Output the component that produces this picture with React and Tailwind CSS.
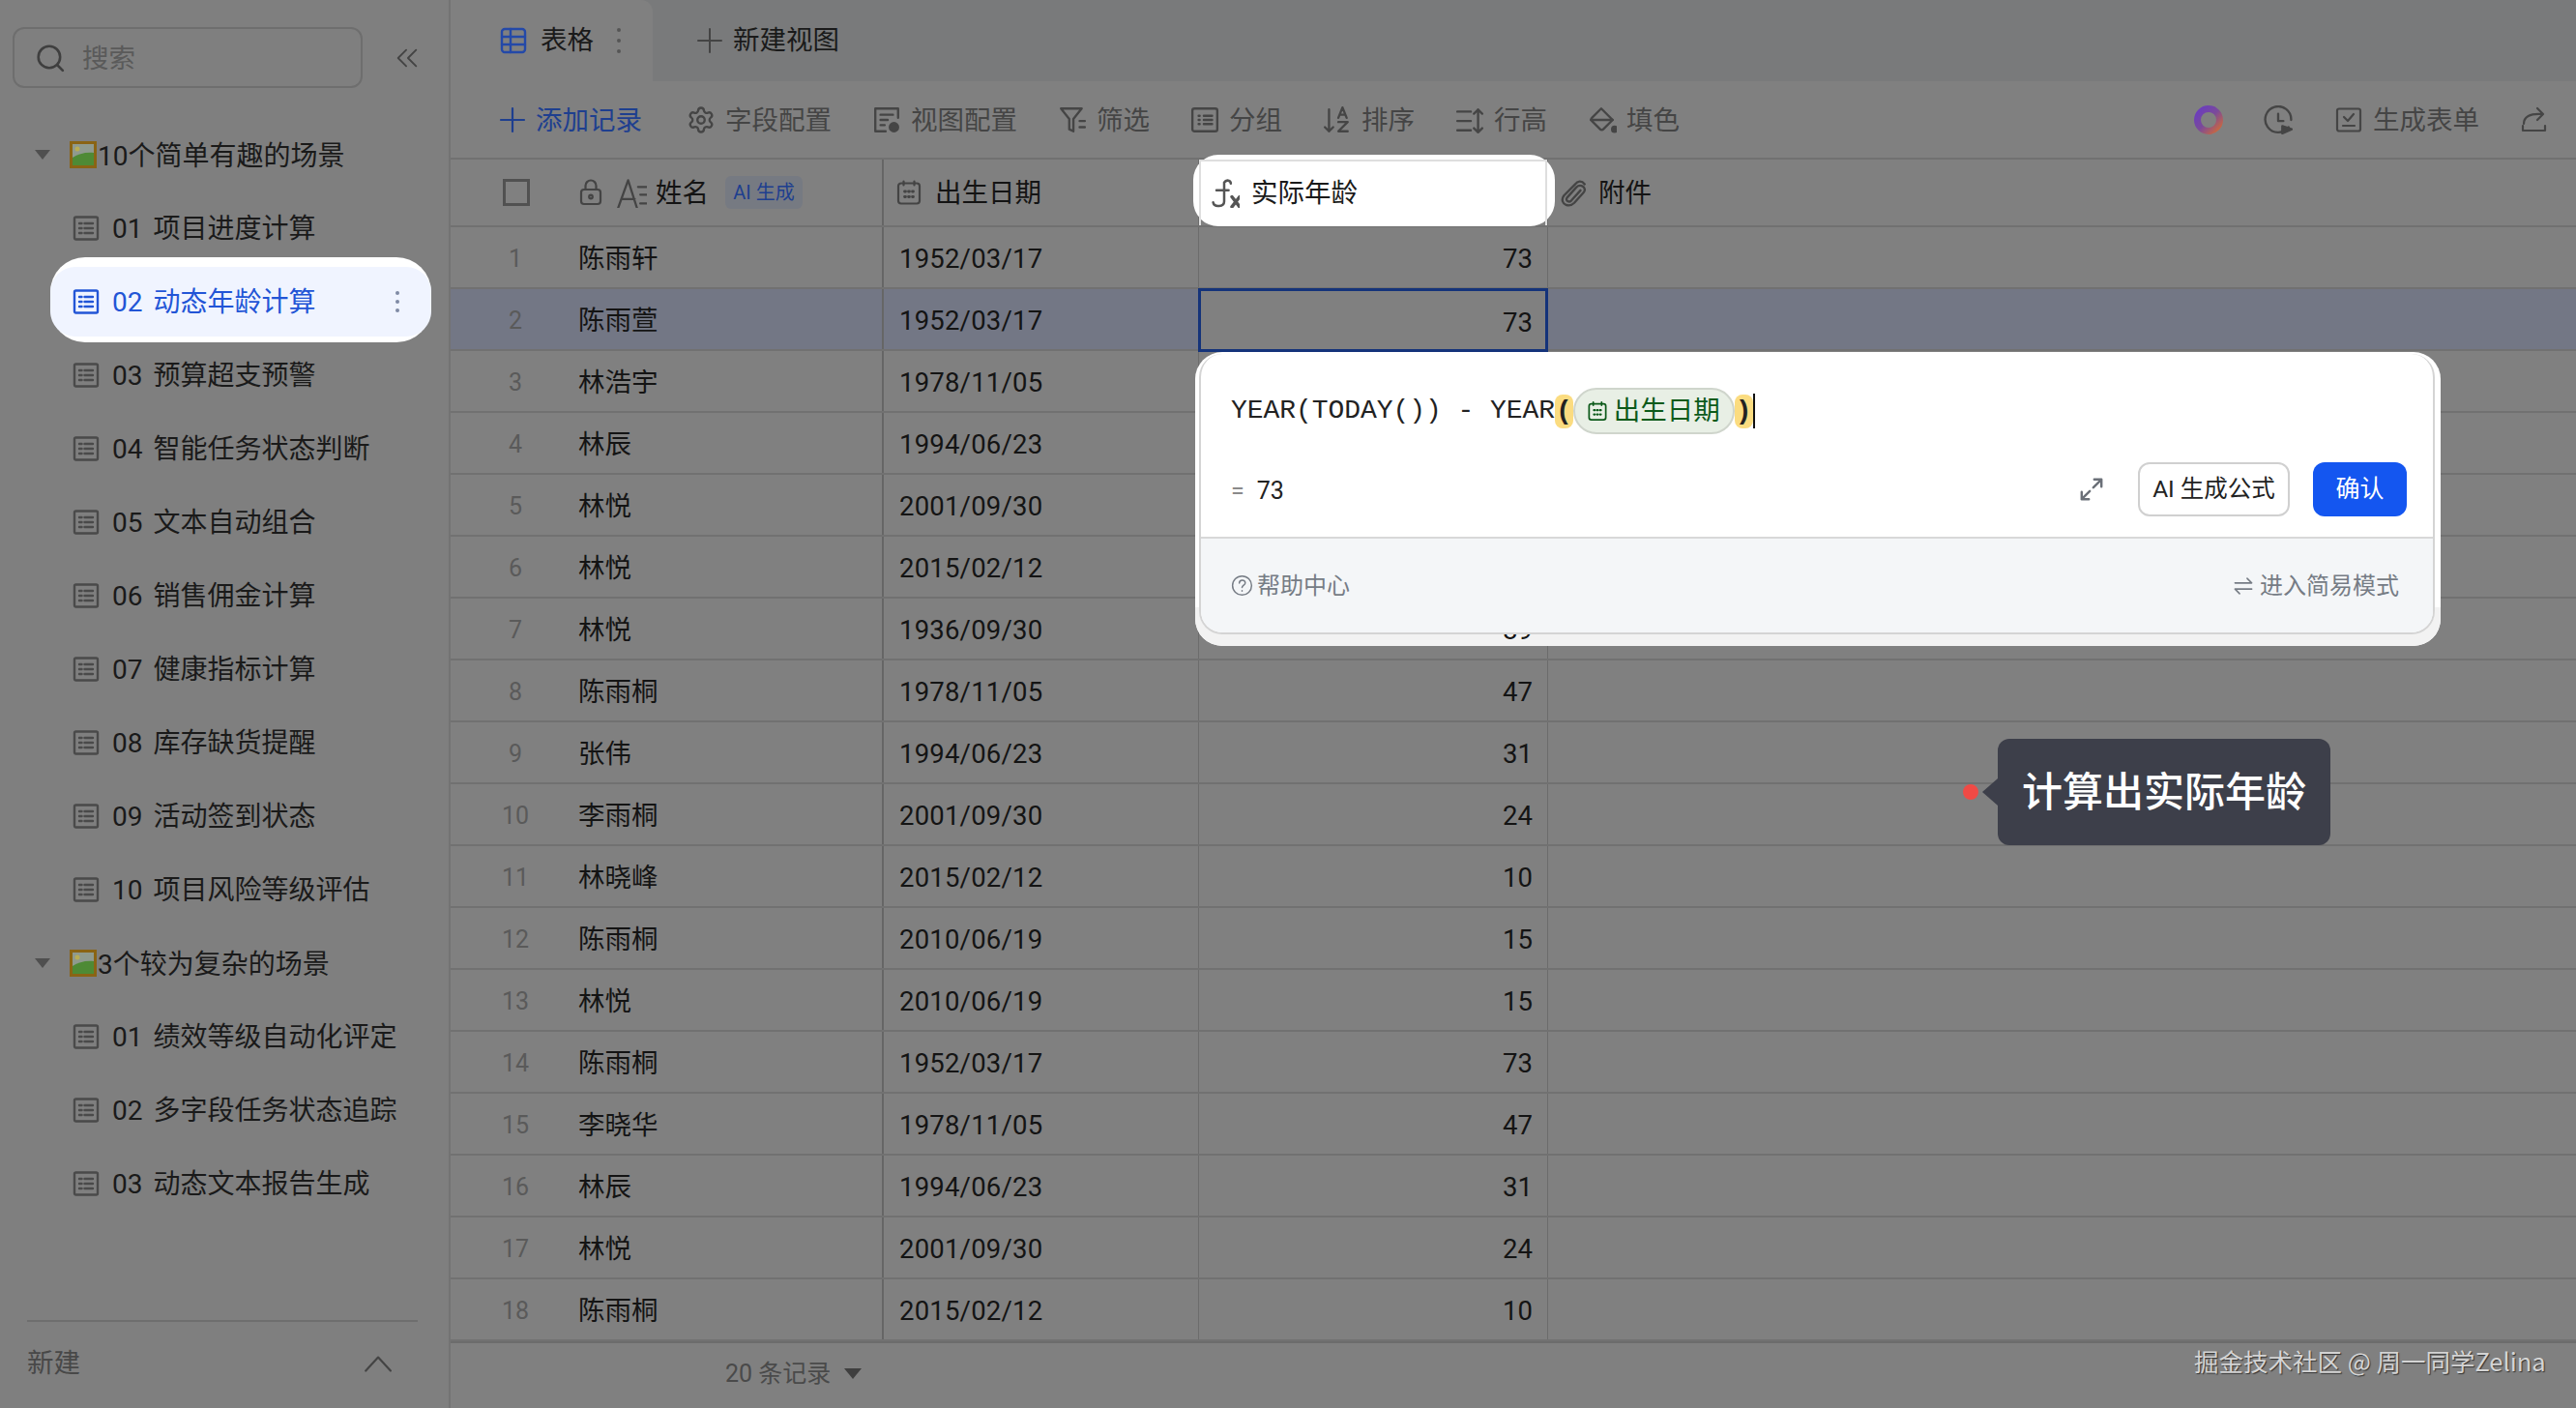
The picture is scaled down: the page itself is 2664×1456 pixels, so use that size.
import React from "react";
import { Settings } from "lucide-react";

const rows = [
  ["陈雨轩", "1952/03/17", 73],
  ["陈雨萱", "1952/03/17", 73],
  ["林浩宇", "1978/11/05", 47],
  ["林辰", "1994/06/23", 31],
  ["林悦", "2001/09/30", 24],
  ["林悦", "2015/02/12", 10],
  ["林悦", "1936/09/30", 89],
  ["陈雨桐", "1978/11/05", 47],
  ["张伟", "1994/06/23", 31],
  ["李雨桐", "2001/09/30", 24],
  ["林晓峰", "2015/02/12", 10],
  ["陈雨桐", "2010/06/19", 15],
  ["林悦", "2010/06/19", 15],
  ["陈雨桐", "1952/03/17", 73],
  ["李晓华", "1978/11/05", 47],
  ["林辰", "1994/06/23", 31],
  ["林悦", "2001/09/30", 24],
  ["陈雨桐", "2015/02/12", 10],
];

const groupOne = ["01 项目进度计算", "02 动态年龄计算", "03 预算超支预警", "04 智能任务状态判断", "05 文本自动组合", "06 销售佣金计算", "07 健康指标计算", "08 库存缺货提醒", "09 活动签到状态", "10 项目风险等级评估"];
const groupTwo = ["01 绩效等级自动化评定", "02 多字段任务状态追踪", "03 动态文本报告生成"];

const Svg = ({ size = 28, className = "", sw = 2.2, children }) => (
  <svg width={size} height={size} viewBox="0 0 28 28" fill="none" stroke="currentColor" strokeWidth={sw} strokeLinecap="round" strokeLinejoin="round" className={`shrink-0 ${className}`}>
    {children}
  </svg>
);

const ListIcon = ({ className }) => (
  <Svg className={className} sw={2.4}>
    <rect x="2" y="2.5" width="24" height="23" rx="1.5" />
    <path d="M7 9h2.5M12.5 9H21M7 14h2.5M12.5 14H21M7 19h2.5M12.5 19H21" />
  </Svg>
);

const CalendarIcon = ({ size = 28, className }) => (
  <Svg size={size} className={className}>
    <rect x="3" y="4.5" width="22" height="21" rx="3" />
    <path d="M8.5 2.5v4M19.5 2.5v4" />
    <path d="M9.5 13h1M13.5 13h1M17.5 13h1M9.5 18.500h1M13.5 18.500h1M17.5 18.500h1" strokeWidth="2.8" />
  </Svg>
);

const PictureEmoji = () => (
  <svg width="28" height="28" viewBox="0 0 28 28" className="shrink-0">
    <rect width="28" height="28" fill="#8a6414" />
    <rect x="3" y="3" width="22" height="22" fill="#8f9a8e" />
    <circle cx="8" cy="8" r="2.5" fill="#b8ad55" />
    <path d="M3 17c6-4 14-6 22-5v13H3z" fill="#4e8a35" />
  </svg>
);

function SideItem({ label, active }) {
  return (
    <div className={`relative flex h-[76px] items-center pl-[75px] ${active ? "text-[#2255d6]" : "text-[#1a1a1a]"}`}>
      {active && (
        <div className="absolute left-[52px] top-[-8px] h-[88px] w-[394px] rounded-[36px] bg-white">
          <div className="mt-[10px] h-[72px] rounded-[26px] bg-[#f0f4ff]" />
        </div>
      )}
      <ListIcon className={`relative ${active ? "text-[#2255d6]" : "text-[#4a4a4a]"}`} />
      <span className="relative ml-[13px] pt-[2px] text-[28px] [word-spacing:4px]">{label}</span>
      {active && (
        <div className="absolute left-[409px] top-[27px] flex flex-col gap-[5px]">
          <i className="size-[4px] rounded-full bg-[#7f8aa5]" />
          <i className="size-[4px] rounded-full bg-[#7f8aa5]" />
          <i className="size-[4px] rounded-full bg-[#7f8aa5]" />
        </div>
      )}
    </div>
  );
}

function SideGroup({ label }) {
  return (
    <div className="flex h-[76px] items-center pl-[36px] text-[#1a1a1a]">
      <i className="mr-[20px] h-0 w-0 border-x-[8px] border-t-[10px] border-x-transparent border-t-[#4f4f4f]" />
      <PictureEmoji />
      <span className="ml-[1px] pt-[3px] text-[28px]">{label}</span>
    </div>
  );
}

function Sidebar() {
  return (
    <aside className="flex w-[466px] shrink-0 flex-col border-r-2 border-[#737373] bg-[#7f7f7f]">
      <div className="flex items-center pl-[13px] pt-[28px]">
        <div className="flex h-[63px] w-[362px] items-center rounded-[12px] border-2 border-[#6e6e6e] pl-[22px] text-[#5a5a5a]">
          <Svg size={30} className="text-[#3f3f3f]" sw={2.4}>
            <circle cx="13" cy="13" r="10.5" />
            <path d="M21 21l5 5" />
          </Svg>
          <span className="ml-[18px] pt-[2px]">搜索</span>
        </div>
        <Svg size={26} className="ml-[33px] text-[#444]" sw={2}>
          <path d="M13 5L4 14l9 9M24 5l-9 9 9 9" />
        </Svg>
      </div>
      <div className="mt-[31px] flex-1">
        <SideGroup label="10个简单有趣的场景" />
        {groupOne.map((t, i) => (
          <SideItem key={t} label={t} active={i === 1} />
        ))}
        <SideGroup label="3个较为复杂的场景" />
        {groupTwo.map((t) => (
          <SideItem key={t} label={t} />
        ))}
      </div>
      <div className="mx-[28px] mb-[27px] flex h-[64px] w-[404px] items-center justify-between border-t-2 border-[#6e6e6e] pt-[24px] text-[#484848]">
        新建
        <Svg size={30} className="mr-[27px] text-[#444]" sw={2}>
          <path d="M3 21L15 8l12 13" />
        </Svg>
      </div>
    </aside>
  );
}

function ToolItem({ icon, label, blue, className = "" }) {
  return (
    <div className={`flex items-center ${blue ? "text-[#1e3f8f]" : "text-[#454545]"} ${className}`}>
      {icon}
      <span className="ml-[10px] pt-[2px]">{label}</span>
    </div>
  );
}

function Tabs() {
  return (
    <div className="flex h-[84px] bg-[#797a7b]">
      <div className="flex w-[209px] items-center rounded-tr-[12px] bg-[#808080] pl-[51px] text-[#1a1a1a]">
        <Svg size={28} className="text-[#2449a8]" sw={2.4}>
          <rect x="2" y="2" width="24" height="24" rx="3" />
          <path d="M2 10h24M2 18h24M11 2v24" />
        </Svg>
        <span className="ml-[14px]">表格</span>
        <div className="ml-[24px] flex flex-col gap-[7px]">
          <i className="size-[4px] rounded-full bg-[#555]" />
          <i className="size-[4px] rounded-full bg-[#555]" />
          <i className="size-[4px] rounded-full bg-[#555]" />
        </div>
      </div>
      <div className="flex items-center pl-[45px] text-[#1a1a1a]">
        <Svg size={28} className="text-[#444]" sw={2}>
          <path d="M14 2v24M2 14h24" />
        </Svg>
        <span className="ml-[10px]">新建视图</span>
      </div>
    </div>
  );
}

function Toolbar() {
  return (
    <div className="flex h-[81px] items-center gap-[42px] border-b-2 border-[#717171] bg-[#808080] pl-[50px]">
      <ToolItem blue className="mr-[4px]" label="添加记录" icon={
        <Svg size={28} sw={2.2}><path d="M14 2v24M2 14h24" /></Svg>
      } />
      <ToolItem label="字段配置" icon={
        <Settings size={30} strokeWidth={1.9} className="shrink-0" />
      } />
      <ToolItem label="视图配置" icon={
        <Svg size={30}>
          <path d="M25 12V3H3v22h10" />
          <path d="M8 9h12M8 14h7M8 19h4" />
          <circle cx="21" cy="21" r="4" fill="#454545" />
        </Svg>
      } />
      <ToolItem label="筛选" icon={
        <Svg size={30}>
          <path d="M3 3h20l-8 10v12l-4-2V13z" />
          <path d="M21 15h5M21 21h5" />
        </Svg>
      } />
      <ToolItem label="分组" icon={
        <Svg size={30}>
          <rect x="2" y="3" width="24" height="22" rx="2" />
          <path d="M8 10h1M8 18h1M13 10h8M13 18h8M8 14h1M13 14h8" />
        </Svg>
      } />
      <ToolItem label="排序" icon={
        <Svg size={30}>
          <path d="M6 4v21M2 21l4 4 4-4" />
          <path d="M15 12l4-10 4 10M16.500 9h5M15 16h9l-9 9h9" />
        </Svg>
      } />
      <ToolItem label="行高" icon={
        <Svg size={30}>
          <path d="M2 6h13M2 15h13M2 24h13" />
          <path d="M22 4v22M18 8l4-4 4 4M18 22l4 4 4-4" />
        </Svg>
      } />
      <ToolItem label="填色" icon={
        <Svg size={30}>
          <path d="M13 3l11 11-9 9a2 2 0 0 1-3 0l-8-8a2 2 0 0 1 0-3z" />
          <path d="M3 14h21" />
          <circle cx="26" cy="23" r="2.5" fill="#454545" />
        </Svg>
      } />
      <div className="ml-auto flex items-center pr-[29px] text-[#454545]">
        <svg width="32" height="32" viewBox="0 0 32 32" fill="none" className="shrink-0">
          <defs>
            <linearGradient id="ring" x1="0" y1="0" x2="1" y2="1">
              <stop offset="0" stopColor="#6a3cc0" />
              <stop offset="0.5" stopColor="#7a4a9a" />
              <stop offset="1" stopColor="#cf6a3a" />
            </linearGradient>
          </defs>
          <circle cx="16" cy="16" r="11.5" stroke="url(#ring)" strokeWidth="7" />
        </svg>
        <Svg size={30} className="ml-[41px]">
          <path d="M24 21A12.5 12.5 0 1 1 26.500 14" />
          <path d="M14 8v7h5" />
          <path d="M18 20l9 3-9 4z" fill="currentColor" />
        </Svg>
        <Svg className="ml-[44px]">
          <rect x="2" y="2.500" width="24" height="23" rx="2" />
          <path d="M9 11l4 4 6-7M8 20h12" />
        </Svg>
        <span className="ml-[11px] pt-[2px]">生成表单</span>
        <Svg size={28} className="ml-[43px]">
          <path d="M3 18c0-7 6-11 19-10M17 2l6 6-6 6" />
          <path d="M2 20v5h23v-5" />
        </Svg>
      </div>
    </div>
  );
}

function HeaderRow() {
  return (
    <div className="grid h-[70px] grid-cols-[448px_326px_361px_1fr] border-b-2 border-[#717171] bg-[#808080] text-[#141414]">
      <div className="flex items-center border-r-2 border-[#666] pl-[54px]">
        <i className="size-[28px] border-[3px] border-[#515151]" />
        <Svg size={28} className="ml-[49px] text-[#444]">
          <rect x="4" y="11" width="20" height="15" rx="3" />
          <path d="M8.500 11V7a5.500 5.500 0 0 1 11 0v4" />
          <circle cx="14" cy="18.500" r="1.800" />
        </Svg>
        <Svg size={32} className="ml-[12px] text-[#444]" sw={2}>
          <path d="M2 28L11 3l8 25M5 20h12M20 9h10M22 16h8M22 24h8" />
        </Svg>
        <span className="ml-[9px] pt-[2px]">姓名</span>
        <div className="ml-[17px] flex h-[34px] w-[80px] items-center justify-center rounded-[6px] bg-[#767a82] text-[20px] text-[#1e3f8f]">AI 生成</div>
      </div>
      <div className="flex items-center border-r border-[#6c6c6c] pl-[12px]">
        <CalendarIcon className="text-[#444]" />
        <span className="ml-[13px] pt-[2px]">出生日期</span>
      </div>
      <div className="relative flex items-center border-r border-[#6c6c6c] pl-[10px]">
        <div className="absolute left-[-6px] top-[-5px] h-[74px] w-[374px] rounded-[26px] bg-white" />
        <div className="absolute left-0 top-0 h-[68px] w-[360px] border-x-2 border-t-2 border-[#dedede]" />
        <Svg size={32} className="relative text-[#555]" sw={2.2}>
          <path d="M14 5c2-3 6-2 6 1M14 5v17c0 5-9 6-10 1M7 12h11" />
          <path d="M21 18l7 9M28 18l-7 9" strokeWidth="3" />
        </Svg>
        <span className="relative ml-[12px] pt-[2px] text-[#1a1a1a]">实际年龄</span>
      </div>
      <div className="flex items-center pl-[11px]">
        <Svg size={30} className="text-[#444]">
          <path d="M25 6c-3-4-7-3-9 0L5 17c-3 4-1 8 2 9s6 0 8-2l9-10c2-2 1-5-1-6s-4-1-6 1L8 19c-2 3 2 5 4 3l9-10" />
        </Svg>
        <span className="ml-[11px] pt-[2px]">附件</span>
      </div>
    </div>
  );
}

function TableRow({ row, index }) {
  const [name, date, age] = row;
  const selected = index === 1;
  return (
    <div className={`grid h-[64px] grid-cols-[448px_326px_361px_1fr] border-b-2 border-[#717171] text-[#141414] ${selected ? "bg-[#737785]" : "bg-[#808080]"}`}>
      <div className="flex items-center border-r-2 border-[#666] pt-[4px]">
        <span className="w-[134px] text-center text-[25px] text-[#5a5a5a]">{index + 1}</span>
        <span className="-ml-[2px]">{name}</span>
      </div>
      <div className="flex items-center border-r border-[#6c6c6c] pl-[16px] pt-[4px] tracking-[0.2px]">{date}</div>
      {selected ? (
        <div className="z-0 -mb-[3px] -ml-[1px] -mt-[1px] flex items-center justify-end border-[3px] border-[#14337a] bg-[#808080] pr-[13px] pt-[5px]">{age}</div>
      ) : (
        <div className="flex items-center justify-end border-r border-[#6c6c6c] pr-[15px] pt-[4px]">
          <span className={index === 6 ? "relative z-20" : ""}>{age}</span>
        </div>
      )}
      <div />
    </div>
  );
}

function FormulaPanel() {
  return (
    <>
      {/* spotlight behind the editor */}
      <div className="absolute left-[1236px] top-[364px] z-10 h-[304px] w-[1288px] rounded-[28px] bg-white">
        <div className="absolute inset-x-0 bottom-0 h-[40px] rounded-b-[28px] bg-[#f2f2f2]" />
      </div>
      <div className="absolute left-[1240px] top-[366px] z-30 flex h-[290px] w-[1278px] flex-col overflow-hidden rounded-[24px] border-x-2 border-b-2 border-[#d4d4d4] bg-white">
        <div className="flex h-[191px] flex-col border-b-2 border-[#d8d8d8] pl-[31px] pr-[27px]">
          <div className="mt-[35px] flex h-[48px] items-center font-['Liberation_Mono',monospace] text-[28px] tracking-[-0.05px] text-[#222]">
            <span className="whitespace-pre">YEAR(TODAY()) - YEAR</span>
            <span className="h-[35px] rounded-[8px] bg-[#fbdc80] px-[1px] leading-[35px] font-bold">(</span>
            <div className="flex h-[48px] w-[167px] items-center rounded-full border-2 border-[#cfd5cc] bg-[#e8efe5] pl-[12px] font-['Roboto','Noto_Sans_CJK_SC',sans-serif] text-[27.5px] text-[#0c5a1a]">
              <CalendarIcon size={22} />
              <span className="ml-[6px]">出生日期</span>
            </div>
            <span className="h-[35px] rounded-[8px] bg-[#fbdc80] px-[1px] leading-[35px] font-bold">)</span>
            <i className="h-[36px] w-[2px] bg-[#111]" />
          </div>
          <div className="mt-[29px] flex items-center justify-between">
            <div className="flex items-center pt-[4px] text-[25px] text-[#222]">
              <span className="text-[#8a8a8a]">=</span>
              <span className="ml-[13px]">73</span>
            </div>
            <div className="flex items-center">
              <Svg size={26} className="text-[#6b7078]" sw={2.6}>
                <path d="M16 12l9-9M17 3h8v8M12 16l-9 9M3 17v8h8" />
              </Svg>
              <div className="ml-[35px] flex h-[56px] w-[157px] items-center justify-center rounded-[12px] border-2 border-[#d0d0d0] text-[24.500px] text-[#222]">AI 生成公式</div>
              <div className="ml-[24px] flex h-[56px] w-[97px] items-center justify-center rounded-[12px] bg-[#1456f0] text-[25px] text-white">确认</div>
            </div>
          </div>
        </div>
        <div className="flex flex-1 items-center justify-between bg-[#f4f6f8] pl-[31px] pr-[35px] text-[24px] text-[#767c85]">
          <div className="flex items-center">
            <Svg size={23} sw={1.8} className="mr-[4px]">
              <circle cx="14" cy="14" r="12" />
              <path d="M10.500 11c0-5 7.500-5 7.500-.5 0 3-4 3-4 6M14 20.500v.5" />
            </Svg>
            帮助中心
          </div>
          <div className="flex items-center">
            <Svg size={22} sw={2} className="mr-[6px]">
              <path d="M3 10h22l-6-6M25 18H3l6 6" />
            </Svg>
            进入简易模式
          </div>
        </div>
      </div>
    </>
  );
}

function Callout() {
  return (
    <div className="absolute left-[2030px] top-[764px] z-30 flex h-[110px] items-center">
      <i className="size-[16px] rounded-full bg-[#f04a45]" />
      <i className="ml-[4px] h-0 w-0 border-y-[14px] border-r-[16px] border-y-transparent border-r-[#3d3f4a]" />
      <div className="flex h-[110px] w-[344px] items-center justify-center rounded-[12px] bg-[#3d3f4a] text-[42px] font-medium text-white">计算出实际年龄</div>
    </div>
  );
}

export default function App() {
  return (
    <div className="relative flex h-[1456px] w-[2664px] overflow-hidden bg-[#808080] font-['Roboto','Noto_Sans_CJK_SC',sans-serif] text-[27.5px]">
      <Sidebar />
      <main className="flex min-w-0 flex-1 flex-col">
        <Tabs />
        <Toolbar />
        <HeaderRow />
        {rows.map((r, i) => (
          <TableRow key={i} row={r} index={i} />
        ))}
        <div className="flex flex-1 items-center border-t-2 border-[#6c6c6c] pb-[4px] pl-[284px] text-[25px] text-[#4a4a4a]">
          20 条记录
          <i className="ml-[14px] h-0 w-0 border-x-[9px] border-t-[11px] border-x-transparent border-t-[#3f3f3f]" />
        </div>
      </main>
      <FormulaPanel />
      <Callout />
      <div className="absolute left-[2269px] top-[1388px] font-['Noto_Sans_CJK_SC',sans-serif] text-[25.500px] text-[#d4d4d4] [text-shadow:1px_1px_1px_#333]">掘金技术社区 @ 周一同学Zelina</div>
    </div>
  );
}
